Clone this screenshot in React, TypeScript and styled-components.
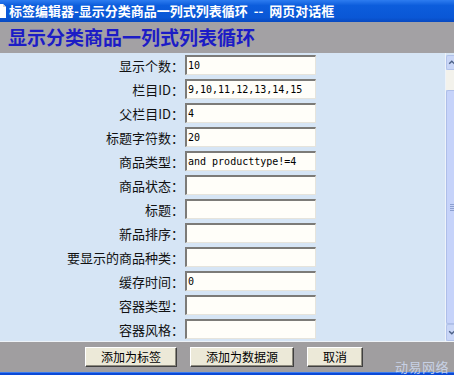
import React from "react";
import styled, { createGlobalStyle } from "styled-components";

const GlobalStyle = createGlobalStyle`
  html, body {
    margin: 0;
    padding: 0;
    overflow: hidden;
    background: #a09ea0;
  }
`;

interface FieldDef {
  label: string;
  value: string;
}

const fields: FieldDef[] = [
  { label: "显示个数：", value: "10" },
  { label: "栏目ID：", value: "9,10,11,12,13,14,15" },
  { label: "父栏目ID：", value: "4" },
  { label: "标题字符数：", value: "20" },
  { label: "商品类型：", value: "and producttype!=4" },
  { label: "商品状态：", value: "" },
  { label: "标题：", value: "" },
  { label: "新品排序：", value: "" },
  { label: "要显示的商品种类：", value: "" },
  { label: "缓存时间：", value: "0" },
  { label: "容器类型：", value: "" },
  { label: "容器风格：", value: "" },
];

const buttons = ["添加为标签", "添加为数据源", "取消"];

export default function App() {
  return (
    <Frame>
      <GlobalStyle />
      <TitleBar>
        <DocIcon width="8" height="14" viewBox="0 0 8 14">
          <path d="M0 0 H5 L8 3 V14 H0 Z" fill="#fff" />
          <path d="M5 0 V3 H8" fill="#d8d8d8" />
        </DocIcon>
        <TitleText>标签编辑器-显示分类商品一列式列表循环  --  网页对话框</TitleText>
      </TitleBar>

      <Heading>显示分类商品一列式列表循环</Heading>

      <Body>
        <FormPane>
          {fields.map((f) => (
            <Row key={f.label}>
              <Label>{f.label}</Label>
              <Field type="text" defaultValue={f.value} readOnly />
            </Row>
          ))}
        </FormPane>

        <ScrollBar>
          <ArrowButton>
            <svg width="8" height="15" viewBox="0 0 8 15">
              <path d="M2.5 9 L5.5 6 L8.5 9" stroke="#4d6185" strokeWidth="1.6" fill="none" />
            </svg>
          </ArrowButton>
          <Track />
          <Thumb>
            <Grip />
          </Thumb>
          <ArrowButton $down>
            <svg width="8" height="15" viewBox="0 0 8 15">
              <path d="M2.5 6 L5.5 9 L8.5 6" stroke="#4d6185" strokeWidth="1.6" fill="none" />
            </svg>
          </ArrowButton>
        </ScrollBar>
      </Body>

      <Footer>
        {buttons.map((b) => (
          <Button key={b}>{b}</Button>
        ))}
      </Footer>

      <TaskStrip />
      <Watermark>动易网络</Watermark>
    </Frame>
  );
}

const Frame = styled.div`
  position: relative;
  width: 454px;
  height: 375px;
  display: flex;
  flex-direction: column;
  overflow: hidden;
  font-family: "Noto Sans CJK SC", "Liberation Sans", sans-serif;
`;

const TitleBar = styled.div`
  height: 22px;
  flex: none;
  display: flex;
  align-items: center;
  background: linear-gradient(#2d7cf0 0%, #0c5ddc 25%, #0a57d6 80%, #0849c0 100%);
`;

const DocIcon = styled.svg`
  margin-left: -2px;
  margin-right: 3px;
  flex: none;
`;

const TitleText = styled.span`
  color: #fff;
  font-size: 13px;
  font-weight: bold;
  white-space: pre;
  line-height: 22px;
`;

const Heading = styled.div`
  height: 31px;
  flex: none;
  background: #a3a1a4;
  color: #1c1cc6;
  font-size: 19px;
  font-weight: bold;
  line-height: 30px;
  padding-left: 8px;
  white-space: nowrap;
`;

const Body = styled.div`
  height: 288px;
  flex: none;
  display: flex;
  background: #d6e5f5;
  border-bottom: 1px solid #eef3f8;
`;

const FormPane = styled.div`
  flex: 1;
  display: flex;
  flex-direction: column;
  border-right: 1px solid #eef3fa;
`;

const Row = styled.div`
  height: 24px;
  display: flex;
  align-items: center;
`;

const Label = styled.span`
  width: 184px;
  text-align: right;
  font-size: 13px;
  color: #111;
  white-space: nowrap;
`;

const Field = styled.input`
  box-sizing: border-box;
  width: 131px;
  height: 20px;
  margin: 0 0 0 1px;
  padding: 0 0 0 1px;
  background: #fffef9;
  border-style: solid;
  border-width: 2px 1px 1px 2px;
  border-color: #7c7b78 #e6e4dc #e6e4dc #7c7b78;
  font-family: "DejaVu Sans Mono", "Liberation Mono", monospace;
  font-size: 10px;
  color: #000;
  outline: none;
`;

const ScrollBar = styled.div`
  width: 8px;
  flex: none;
  display: flex;
  flex-direction: column;
  padding-top: 2px;
  overflow: hidden;
`;

const ArrowButton = styled.div<{ $down?: boolean }>`
  height: ${({ $down }) => ($down ? "17px" : "15px")};
  flex: none;
  box-sizing: border-box;
  background: #c9d6f7;
  border: 1px solid #b2c2ea;
  border-right: none;
  border-radius: 2px 0 0 2px;
  display: flex;
  align-items: center;
`;

const Track = styled.div`
  height: 20px;
  flex: none;
  background: #f3f2ec;
`;

const Thumb = styled.div`
  flex: 1;
  box-sizing: border-box;
  background: #c6d3fa;
  border: 1px solid #aebee8;
  border-right: none;
  border-radius: 2px 0 0 2px;
  display: flex;
  align-items: center;
  justify-content: flex-end;
`;

const Grip = styled.div`
  width: 4px;
  height: 7px;
  background: repeating-linear-gradient(#8c9fd0 0 1px, transparent 1px 2px);
`;

const Footer = styled.div`
  height: 30px;
  flex: none;
  display: flex;
  align-items: center;
  justify-content: center;
  gap: 13px;
  padding-right: 6px;
  background: #a09ea0;
`;

const Button = styled.button`
  box-sizing: border-box;
  height: 20px;
  padding: 0 15px;
  background: #ece9d8;
  border: 1px solid;
  border-color: #fff #404040 #404040 #fff;
  box-shadow: inset -1px -1px 0 #8d8a7e;
  font-family: "Noto Sans CJK SC", sans-serif;
  font-size: 12px;
  line-height: 18px;
  color: #000;
  white-space: nowrap;
`;

const TaskStrip = styled.div`
  flex: 1;
  background: linear-gradient(#3a7bf0 0 1px, #0b4ad6 1px);
`;

const Watermark = styled.span`
  position: absolute;
  right: 5px;
  bottom: -1px;
  font-size: 13px;
  color: rgba(205, 216, 238, 0.9);
  letter-spacing: 0.5px;
`;
